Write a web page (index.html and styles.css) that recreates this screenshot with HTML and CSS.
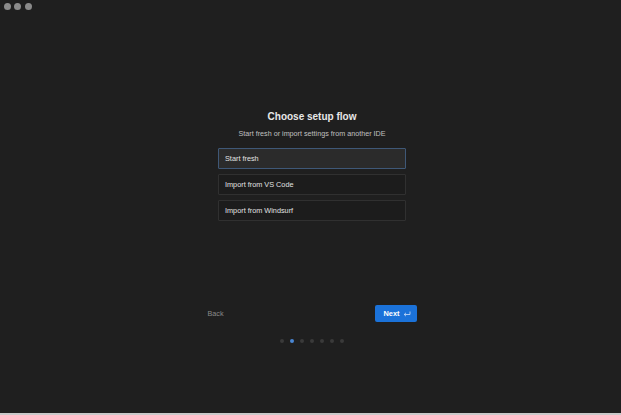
FILE: index.html
```html
<!DOCTYPE html>
<html lang="en">
<head>
    <meta charset="UTF-8">
    <meta name="viewport" content="width=device-width, initial-scale=1.0">
    <title>Choose setup flow</title>
    <link rel="stylesheet" href="styles.css">
</head>
<body>
    <div class="window">
        <div class="titlebar">
            <span class="light"></span>
            <span class="light"></span>
            <span class="light"></span>
        </div>

        <div class="setup">
            <h1 class="title">Choose setup flow</h1>
            <p class="subtitle">Start fresh or import settings from another IDE</p>

            <div class="options">
                <button class="option selected">Start fresh</button>
                <button class="option">Import from VS Code</button>
                <button class="option">Import from Windsurf</button>
            </div>

            <div class="actions">
                <button class="back">Back</button>
                <button class="next">
                    Next
                    <svg class="enter" width="8" height="6" viewBox="0 0 8 6">
                        <path d="M7 0.5 V3.5 H1.2 M3 1.8 L1.2 3.5 L3 5.2" fill="none" stroke="currentColor" stroke-width="0.8"/>
                    </svg>
                </button>
            </div>

            <div class="steps">
                <span class="step"></span>
                <span class="step active"></span>
                <span class="step"></span>
                <span class="step"></span>
                <span class="step"></span>
                <span class="step"></span>
                <span class="step"></span>
            </div>
        </div>
    </div>
</body>
</html>
```

FILE: styles.css
```css
* {
    box-sizing: border-box;
}
html, body {
    margin: 0;
    background-color: #1f1f1f;
}
body {
    font-family: "Liberation Sans", Arial, sans-serif;
}
.window {
    height: 415px;
    border-bottom: 2px solid #c9c9c9;
    background-color: #1f1f1f;
}

/* window controls */
.titlebar {
    display: flex;
    gap: 3.5px;
    padding: 3px 0 0 3.5px;
    height: 10px;
}
.light {
    width: 7px;
    height: 7px;
    border-radius: 50%;
    background-color: #8b8b8b;
}

.setup {
    display: flex;
    flex-direction: column;
    align-items: center;
    padding-left: 3px;
    margin-top: 101px;
}
.title {
    margin: 0;
    font-size: 10px;
    line-height: 12px;
    font-weight: bold;
    color: #e8e8e8;
}
.subtitle {
    margin: 6px 0 0;
    font-size: 7.2px;
    line-height: 10px;
    color: #c0c0c0;
}

.options {
    display: flex;
    flex-direction: column;
    gap: 5px;
    width: 188px;
    margin-top: 9px;
}
.option {
    height: 21px;
    padding: 0 6px;
    text-align: left;
    font-family: inherit;
    font-size: 7.3px;
    color: #e2e2e2;
    background-color: #1c1c1c;
    border: 1px solid #303030;
    border-radius: 1px;
}
.option.selected {
    background-color: #2b2b2b;
    border-color: #3f5877;
}

.actions {
    display: flex;
    justify-content: space-between;
    align-items: center;
    width: 209px;
    margin-top: 84px;
}
.back {
    padding: 0;
    font-family: inherit;
    font-size: 7.2px;
    color: #8a8a8a;
    background: none;
    border: none;
}
.next {
    display: flex;
    align-items: center;
    gap: 3px;
    height: 17px;
    padding: 0 6px 0 8px;
    font-family: inherit;
    font-size: 7.4px;
    font-weight: bold;
    color: #ffffff;
    background-color: #1b72d9;
    border: none;
    border-radius: 2px;
}
.enter {
    color: #cfe0f7;
}

.steps {
    display: flex;
    gap: 6px;
    margin-top: 17px;
}
.step {
    width: 4px;
    height: 4px;
    border-radius: 50%;
    background-color: #3a3a3a;
}
.step.active {
    background-color: #4a87d4;
}
```
